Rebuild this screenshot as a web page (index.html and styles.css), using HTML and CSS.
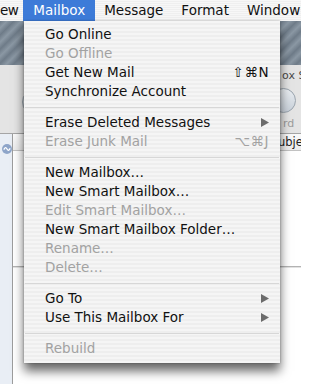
FILE: index.html
```html
<!DOCTYPE html>
<html>
<head>
<meta charset="utf-8">
<link rel="stylesheet" href="styles.css">
</head>
<body>
<div class="menubar">
  <span class="mb-item mb-first">ew</span>
  <span class="mb-item mb-active">Mailbox</span>
  <span class="mb-item">Message</span>
  <span class="mb-item">Format</span>
  <span class="mb-item">Window</span>
</div>
<div class="window">
  <div class="tb-stripes"></div>
  <div class="tb-lower">
    <div class="tb-btn-left"></div>
    <div class="tb-right">
      <span class="tb-label">ox S</span>
      <div class="tb-round"></div>
      <span class="tb-label dim">rd</span>
    </div>
  </div>
  <div class="pane">
    <div class="sidebar">
      <svg class="mb-icon" width="10" height="10" viewBox="0 0 10 10">
        <circle cx="5" cy="5" r="5" fill="#8ea5c9"/>
        <path d="M1.8 5.6 C3 3.2 4 3.2 5 5 C6 6.8 7 6.8 8.2 4.4" fill="none" stroke="#fff" stroke-width="1.3"/>
      </svg>
    </div>
    <div class="main">
      <div class="colhead"><span class="col-subject">ubje</span></div>
      <div class="list">
        <div class="list-row"></div>
      </div>
    </div>
  </div>
</div>

<div class="menu">
  <div class="mi">Go Online</div>
  <div class="mi dis">Go Offline</div>
  <div class="mi">Get New Mail<span class="sc">⇧⌘N</span></div>
  <div class="mi">Synchronize Account</div>
  <div class="sep"></div>
  <div class="mi">Erase Deleted Messages<svg class="arrow" width="8" height="9" viewBox="0 0 8 9"><polygon points="0,0 8,4.5 0,9" fill="#6b6b6b"/></svg></div>
  <div class="mi dis">Erase Junk Mail<span class="sc">⌥⌘J</span></div>
  <div class="sep"></div>
  <div class="mi">New Mailbox…</div>
  <div class="mi">New Smart Mailbox…</div>
  <div class="mi dis">Edit Smart Mailbox…</div>
  <div class="mi">New Smart Mailbox Folder…</div>
  <div class="mi dis">Rename…</div>
  <div class="mi dis">Delete…</div>
  <div class="sep"></div>
  <div class="mi">Go To<svg class="arrow" width="8" height="9" viewBox="0 0 8 9"><polygon points="0,0 8,4.5 0,9" fill="#6b6b6b"/></svg></div>
  <div class="mi">Use This Mailbox For<svg class="arrow" width="8" height="9" viewBox="0 0 8 9"><polygon points="0,0 8,4.5 0,9" fill="#6b6b6b"/></svg></div>
  <div class="sep"></div>
  <div class="mi dis">Rebuild</div>
</div>
</body>
</html>
```

FILE: styles.css
```css
html, body {
  margin: 0;
  padding: 0;
}
body {
  width: 301px;
  height: 384px;
  overflow: hidden;
  position: relative;
  background: #fff;
  font-family: "DejaVu Sans", "Liberation Sans", sans-serif;
  color: #000;
}

/* menu bar */
.menubar {
  height: 21px;
  display: flex;
  white-space: nowrap;
  font-size: 13.5px;
  line-height: 21px;
  color: #111;
  background: repeating-linear-gradient(to bottom, #f7f7f7 0, #f7f7f7 1px, #efefef 1px, #efefef 2px);
}
.mb-item {
  padding: 0 9px;
}
.mb-first {
  padding: 0 5px 0 0;
  letter-spacing: -0.5px;
}
.mb-active {
  padding: 0 10px;
  background: #3d7bd8;
  color: #fff;
}

/* window behind */
.window {
  height: 363px;
  display: flex;
  flex-direction: column;
}
.tb-stripes {
  height: 44px;
  background: repeating-linear-gradient(135deg, #6e7b88 0px, #8b98a4 5px, #6e7b88 10px);
}
.tb-lower {
  height: 68px;
  background: #e4e4e4;
  display: flex;
  justify-content: space-between;
  align-items: flex-start;
}
.tb-btn-left {
  width: 24px;
  height: 24px;
  margin: 24px 0 0 22px;
  border-radius: 50%;
  border: 1px solid #9aa4ae;
  background: linear-gradient(#eef1f4, #c9d1d9);
}
.tb-right {
  width: 30px;
  display: flex;
  flex-direction: column;
  align-items: flex-start;
}
.tb-label {
  margin-top: 4px;
  padding-left: 11px;
  font-size: 11px;
  line-height: 13px;
  color: #4a4a4a;
  white-space: nowrap;
}
.tb-label.dim {
  padding-left: 12px;
  color: #9c9c9c;
}
.tb-round {
  width: 23px;
  height: 23px;
  margin-top: 6px;
  border-radius: 50%;
  border: 1px solid #9aa4ae;
  background: linear-gradient(#e9edf1, #c8d0d9);
}

.pane {
  flex: 1;
  display: flex;
  border-top: 1px solid #a5a5a5;
}
.sidebar {
  width: 15px;
  background: #e9eef5;
  border-right: 1px solid #9c9c9c;
  padding-top: 10px;
  box-sizing: border-box;
}
.mb-icon {
  display: block;
  margin-left: 2px;
}
.main {
  flex: 1;
  display: flex;
  flex-direction: column;
}
.colhead {
  height: 16px;
  border-bottom: 1px solid #c2c2c2;
  background: linear-gradient(#fafafa, #ececec);
  font-size: 11.5px;
  line-height: 16px;
  color: #222;
  white-space: nowrap;
}
.col-subject {
  margin-left: 265px;
}
.list {
  flex: 1;
  background: #fff;
}
.list-row {
  height: 115px;
  border-bottom: 1px solid #b3b3b3;
  box-shadow: 0 1px 0 #e2e2e2;
}

/* dropdown menu */
.menu {
  position: absolute;
  left: 24px;
  top: 21px;
  width: 256px;
  padding: 4px 0 5px;
  background: repeating-linear-gradient(to bottom, #f5f5f5 0, #f5f5f5 2px, #eeeeee 2px, #eeeeee 4px);
  box-shadow: 0 8px 10px rgba(0, 0, 0, 0.6), 0 0 2px rgba(0, 0, 0, 0.3);
  font-size: 13.5px;
}
.mi {
  height: 19px;
  line-height: 19px;
  display: flex;
  align-items: center;
  justify-content: space-between;
  padding: 0 11px 0 21px;
  white-space: nowrap;
  color: #111;
}
.mi.dis {
  color: #a2a2a2;
}
.sc {
  letter-spacing: 0.5px;
}
.arrow {
  display: block;
}
.sep {
  height: 12px;
  display: flex;
  align-items: center;
}
.sep::before {
  content: "";
  flex: 1;
  height: 1px;
  margin: 0 1px;
  background: #d7d7d7;
}
```
